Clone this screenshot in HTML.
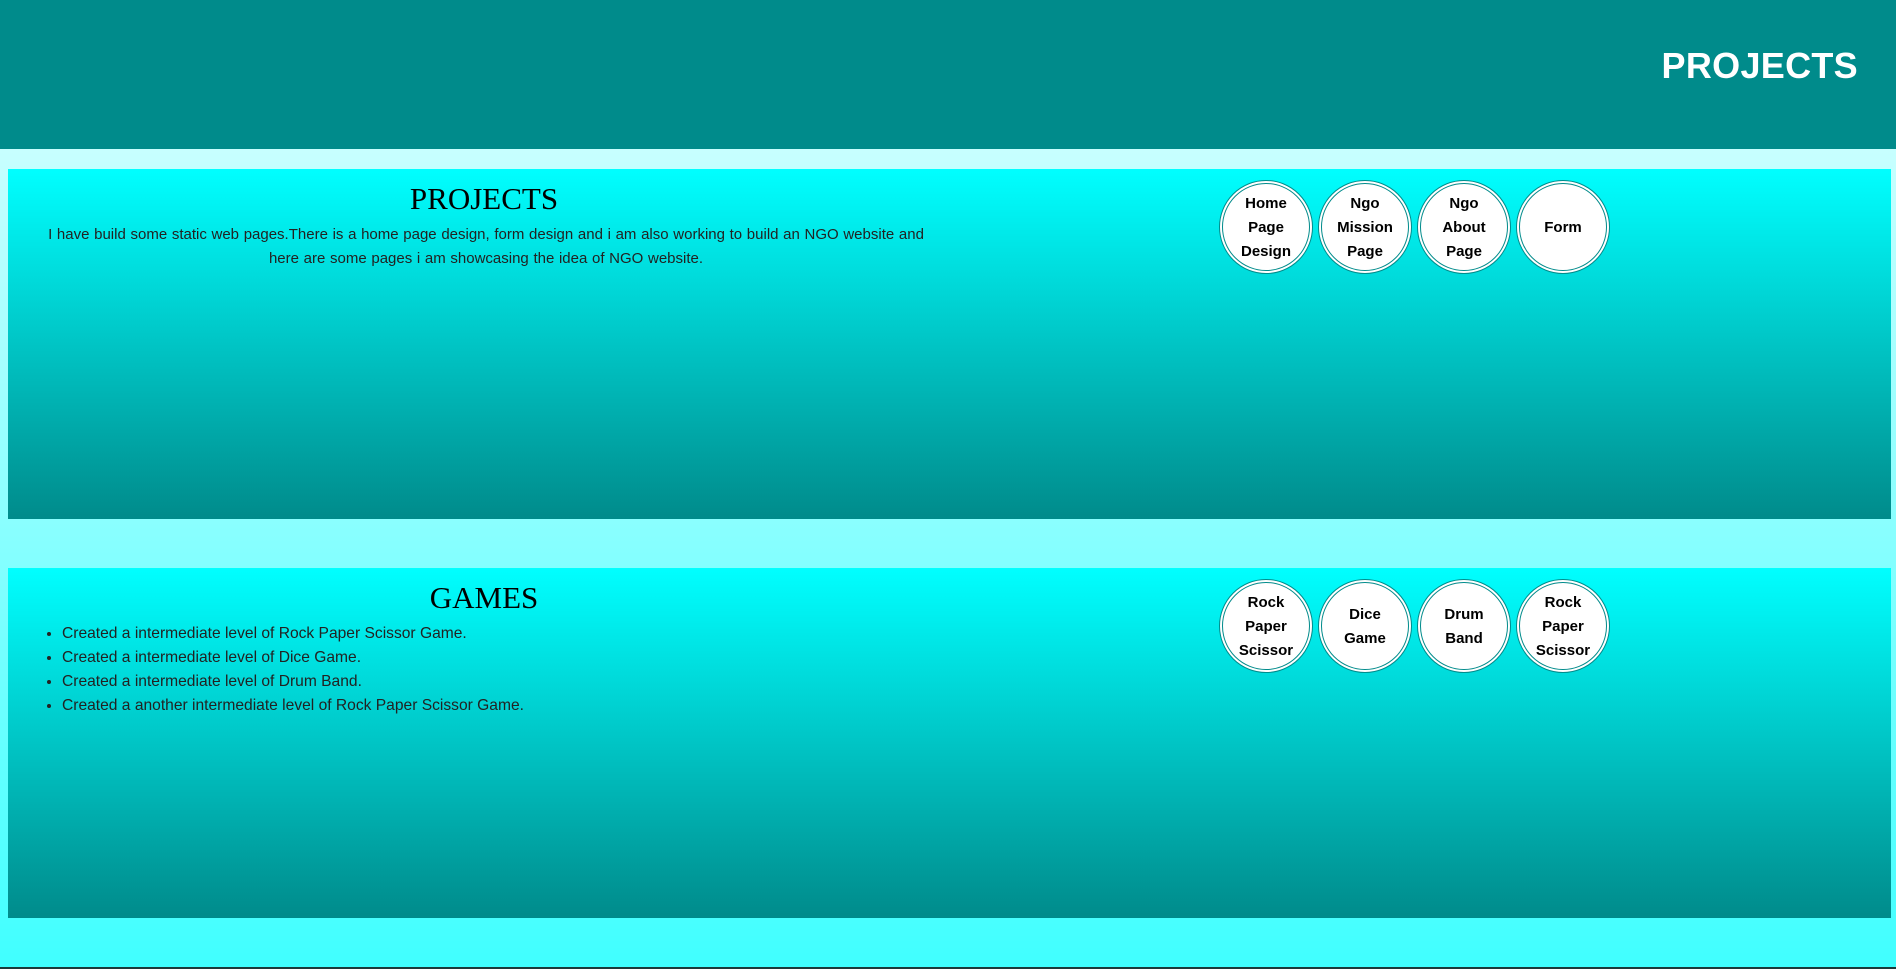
<!DOCTYPE html>
<html><head><meta charset="utf-8"><style>
*{box-sizing:border-box}
body{margin:0;width:1896px;height:969px;overflow:hidden;background:linear-gradient(#e0ffff 0%,#40ffff 100%);font-family:"Liberation Sans",sans-serif;position:relative}
header{height:149px;background:#008b8b;position:relative}
header h1{position:absolute;right:38px;top:45px;margin:0;color:#fff;font-size:36px;font-weight:bold;letter-spacing:0.3px}
.sec{position:absolute;left:8px;width:1883px;height:350px;background:linear-gradient(#00ffff,#008b8b)}
.left{position:absolute;left:0;top:0;width:952px;text-align:center}
.left h2{font-family:"Liberation Serif",serif;font-weight:normal;font-size:31px;margin:12px 0 6px;color:#000}
.left p{margin:0 30px 0 34px;font-size:15px;line-height:24px;color:#222;word-spacing:0.5px}
ul{text-align:left;margin:0;padding-left:54px;font-size:15.6px;line-height:24px;color:#222}
.c{position:absolute;top:11px;width:94px;height:94px;border-radius:50%;background:#fff;border:4px double #008b8b;display:flex;align-items:center;justify-content:center;text-align:center;font-weight:bold;font-size:15px;line-height:24px;color:#000;padding-top:2px}
</style></head><body>
<header><h1>PROJECTS</h1></header>
<div class="sec" style="top:169px">
 <div class="left"><h2>PROJECTS</h2><p>I have build some static web pages.There is a home page design, form design and i am also working to build an NGO website and here are some pages i am showcasing the idea of NGO website.</p></div>
 <div class="c" style="left:1211px">Home<br>Page<br>Design</div>
 <div class="c" style="left:1310px">Ngo<br>Mission<br>Page</div>
 <div class="c" style="left:1409px">Ngo<br>About<br>Page</div>
 <div class="c" style="left:1508px">Form</div>
</div>
<div class="sec" style="top:568px">
 <div class="left"><h2>GAMES</h2><ul>
 <li>Created a intermediate level of Rock Paper Scissor Game.</li>
 <li>Created a intermediate level of Dice Game.</li>
 <li>Created a intermediate level of Drum Band.</li>
 <li>Created a another intermediate level of Rock Paper Scissor Game.</li></ul></div>
 <div class="c" style="left:1211px">Rock<br>Paper<br>Scissor</div>
 <div class="c" style="left:1310px">Dice<br>Game</div>
 <div class="c" style="left:1409px">Drum<br>Band</div>
 <div class="c" style="left:1508px">Rock<br>Paper<br>Scissor</div>
</div>
<div style="position:absolute;left:0;bottom:0;width:1896px;height:2px;background:#1a3a3a"></div>
</body></html>
